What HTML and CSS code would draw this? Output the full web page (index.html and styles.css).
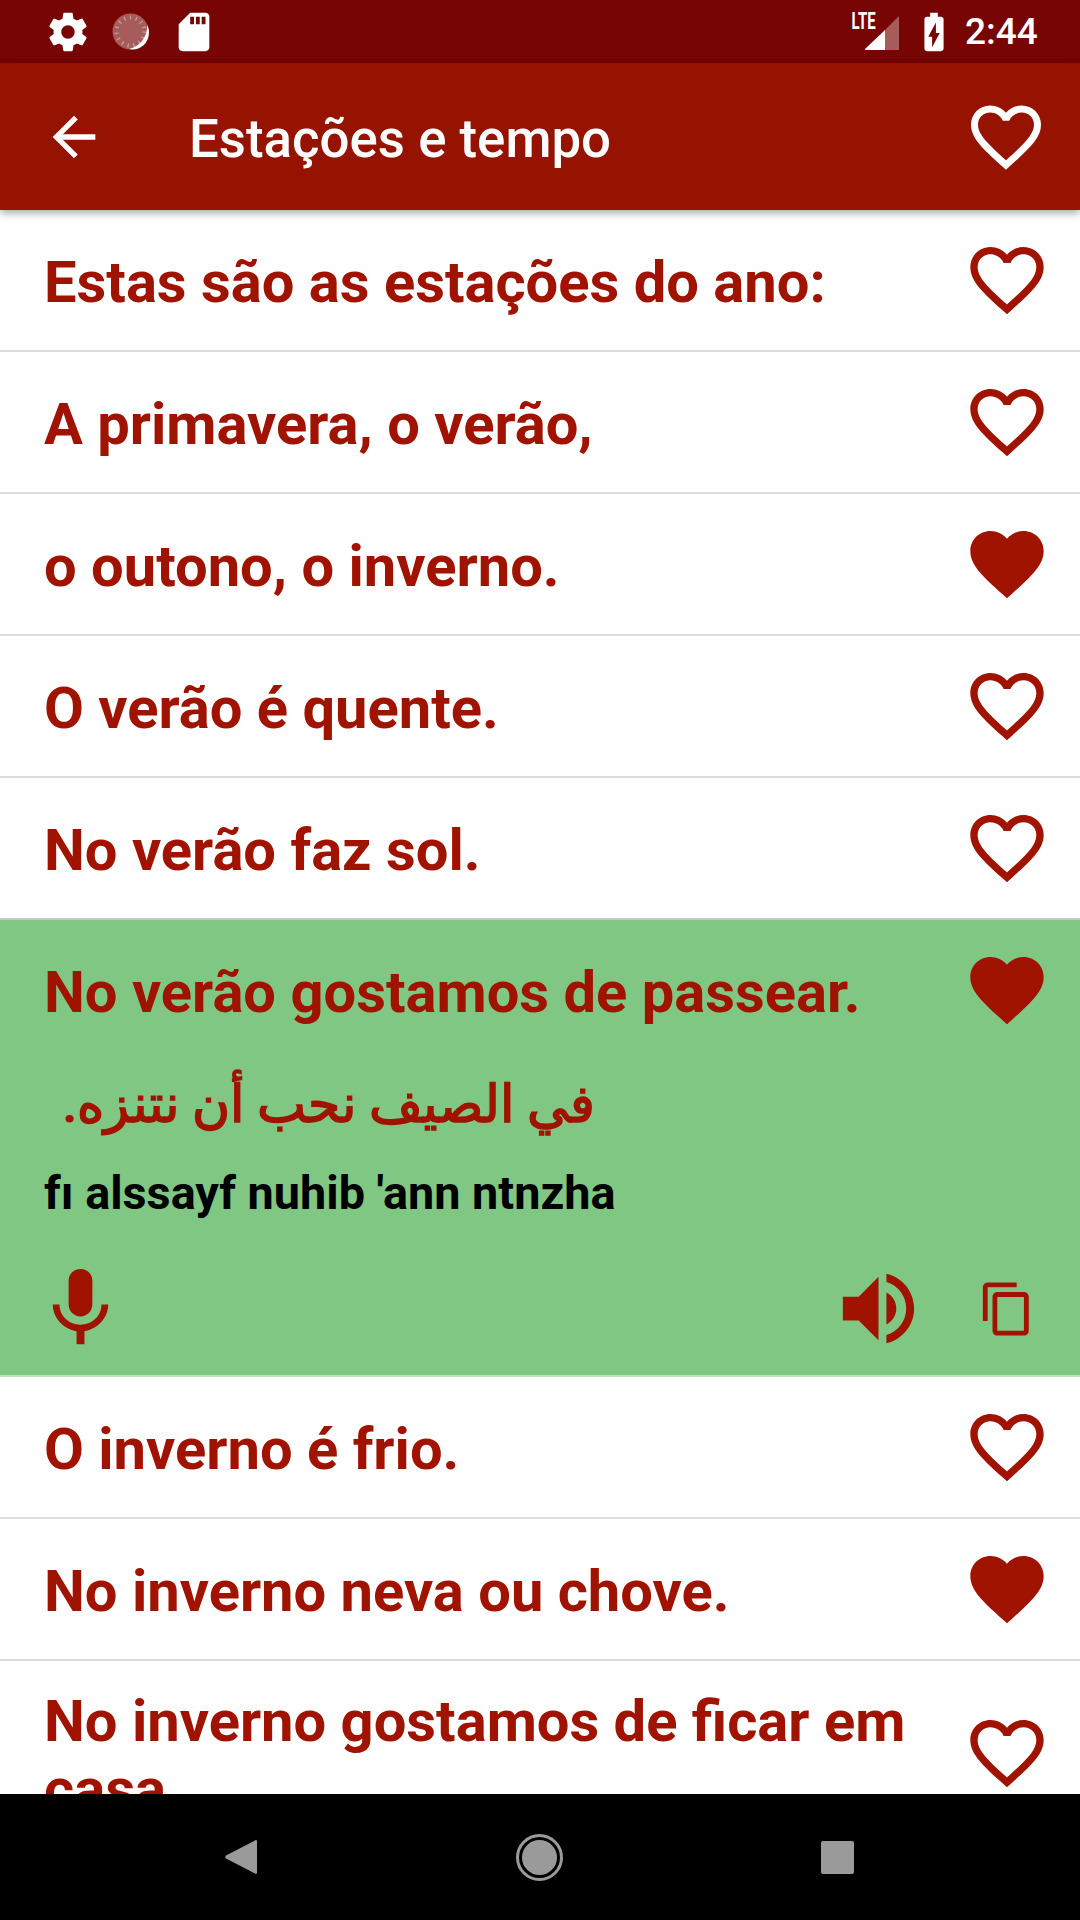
FILE: index.html
```html
<!DOCTYPE html>
<html lang="pt">
<head>
    <meta charset="utf-8">
    <title>Estações e tempo</title>
    <link rel="stylesheet" href="styles.css">
</head>
<body>
<div id="screen">
    <div id="status-bar">
        <svg class="st-gear" viewBox="0 0 24 24"><path d="M19.43 12.98c.04-.32.07-.64.07-.98s-.03-.66-.07-.98l2.11-1.65c.19-.15.24-.42.12-.64l-2-3.46c-.12-.22-.39-.3-.61-.22l-2.49 1c-.52-.4-1.08-.73-1.69-.98l-.38-2.65C14.46 2.18 14.25 2 14 2h-4c-.25 0-.46.18-.49.42l-.38 2.65c-.61.25-1.17.59-1.69.98l-2.49-1c-.23-.09-.49 0-.61.22l-2 3.46c-.13.22-.07.49.12.64l2.11 1.65c-.04.32-.07.65-.07.98s.03.66.07.98l-2.11 1.65c-.19.15-.24.42-.12.64l2 3.46c.12.22.39.3.61.22l2.49-1c.52.4 1.08.73 1.69.98l.38 2.65c.03.24.24.42.49.42h4c.25 0 .46-.18.49-.42l.38-2.65c.61-.25 1.17-.59 1.69-.98l2.49 1c.23.09.49 0 .61-.22l2-3.46c.12-.22.07-.49-.12-.64l-2.11-1.65zM12 15.5c-1.93 0-3.5-1.57-3.5-3.5s1.57-3.5 3.5-3.5 3.5 1.57 3.5 3.5-1.57 3.5-3.5 3.5z"/></svg>
        <svg class="st-sync" viewBox="0 0 40 40">
            <circle cx="19.5" cy="19.5" r="18" fill="#fff" fill-opacity=".35"/>
            <circle cx="19.5" cy="19.5" r="14" fill="none" stroke="#fff" stroke-opacity=".4" stroke-width="4" stroke-dasharray="1.3 4.6"/>
            <path d="M36 13c1 9 -5 21 -18 24 8 2 20 -3 20 -17 0 -3 -1 -5 -2 -7z"/>
        </svg>
        <svg class="st-sd" viewBox="0 0 24 24"><path d="M18 2h-8L4.02 8 4 20c0 1.1.9 2 2 2h12c1.1 0 2-.9 2-2V4c0-1.1-.9-2-2-2zm-6 6h-2V4h2v4zm3 0h-2V4h2v4zm3 0h-2V4h2v4z"/></svg>
        <div class="spacer"></div>
        <div class="st-signal">
            <span class="st-lte">LTE</span>
            <svg viewBox="0 0 36 36">
                <path d="M1 34 21 15v20H2c-1 0-1.500-.5-1-1z"/>
                <path d="M21 15 35 1v33c0 .6-.4 1-1 1H21z" fill-opacity=".35"/>
            </svg>
        </div>
        <svg class="st-battery" viewBox="0 0 24 24"><path d="M15.67 4H14V2h-4v2H8.33C7.6 4 7 4.6 7 5.33v15.33C7 21.4 7.6 22 8.33 22h7.33c.74 0 1.34-.6 1.34-1.33V5.33C17 4.6 16.4 4 15.67 4zM11 20v-5.5H9L13 7v5.5h2L11 20z"/></svg>
        <span class="st-time">2:44</span>
    </div>

    <header id="app-bar">
        <svg class="back" viewBox="0 0 24 24"><path d="M20 11H7.83l5.59-5.59L12 4l-8 8 8 8 1.41-1.41L7.83 13H20v-2z"/></svg>
        <h1>Estações e tempo</h1>
        <svg class="bar-heart" viewBox="0 0 24 24"><use href="#heart-line"/></svg>
    </header>

    <main id="list">
        <div class="phrase">
            <div class="phrase-head"><p>Estas são as estações do ano:</p><svg class="heart" viewBox="0 0 24 24"><use href="#heart-line"/></svg></div>
        </div>
        <div class="phrase">
            <div class="phrase-head"><p>A primavera, o verão,</p><svg class="heart" viewBox="0 0 24 24"><use href="#heart-line"/></svg></div>
        </div>
        <div class="phrase">
            <div class="phrase-head"><p>o outono, o inverno.</p><svg class="heart" viewBox="0 0 24 24"><use href="#heart-full"/></svg></div>
        </div>
        <div class="phrase">
            <div class="phrase-head"><p>O verão é quente.</p><svg class="heart" viewBox="0 0 24 24"><use href="#heart-line"/></svg></div>
        </div>
        <div class="phrase">
            <div class="phrase-head"><p>No verão faz sol.</p><svg class="heart" viewBox="0 0 24 24"><use href="#heart-line"/></svg></div>
        </div>
        <div class="phrase open">
            <div class="phrase-head"><p>No verão gostamos de passear.</p><svg class="heart" viewBox="0 0 24 24"><use href="#heart-full"/></svg></div>
            <p class="arabic" lang="ar" dir="rtl">في الصيف نحب أن نتنزه.</p>
            <p class="translit">fı alssayf nuhib 'ann ntnzha</p>
            <div class="actions">
                <svg class="mic" viewBox="0 0 24 24"><path d="M12 14c1.660 0 2.990-1.340 2.990-3L15 5c0-1.660-1.340-3-3-3S9 3.340 9 5v6c0 1.660 1.340 3 3 3zm5.300-3c0 3-2.540 5.100-5.300 5.100S6.700 14 6.700 11H5c0 3.410 2.720 6.230 6 6.720V21h2v-3.280c3.280-.48 6-3.300 6-6.720h-1.700z"/></svg>
                <div class="spacer"></div>
                <svg class="speaker" viewBox="0 0 24 24"><path d="M3 9v6h4l5 5V4L7 9H3zm13.500 3c0-1.770-1.020-3.290-2.500-4.030v8.050c1.480-.73 2.500-2.250 2.500-4.020zM14 3.230v2.060c2.890.86 5 3.540 5 6.710s-2.110 5.850-5 6.710v2.060c4.010-.91 7-4.490 7-8.770s-2.990-7.860-7-8.770z"/></svg>
                <svg class="copy" viewBox="0 0 24 24"><path d="M16 1H4c-1.100 0-2 .9-2 2v14h2V3h12V1zm3 4H8c-1.100 0-2 .9-2 2v14c0 1.100.9 2 2 2h11c1.100 0 2-.9 2-2V7c0-1.100-.9-2-2-2zm0 16H8V7h11v14z"/></svg>
            </div>
        </div>
        <div class="phrase">
            <div class="phrase-head"><p>O inverno é frio.</p><svg class="heart" viewBox="0 0 24 24"><use href="#heart-line"/></svg></div>
        </div>
        <div class="phrase">
            <div class="phrase-head"><p>No inverno neva ou chove.</p><svg class="heart" viewBox="0 0 24 24"><use href="#heart-full"/></svg></div>
        </div>
        <div class="phrase">
            <div class="phrase-head"><p>No inverno gostamos de ficar em casa.</p><svg class="heart" viewBox="0 0 24 24"><use href="#heart-line"/></svg></div>
        </div>
    </main>

    <nav id="nav-bar">
        <svg class="nav-back" viewBox="0 0 32 36"><path d="M30 1.500c1 -.8 2 -.3 2 1v31c0 1.300 -1 1.800 -2 1L1 19.500c-1 -.8 -1 -2.200 0 -3z"/></svg>
        <div class="nav-home"><div class="nav-home-dot"></div></div>
        <div class="nav-recent"></div>
    </nav>
</div>

<!-- shared heart shapes -->
<svg class="defs" width="0" height="0">
    <defs>
        <path id="heart-line" d="M16.500 3c-1.740 0-3.410.81-4.500 2.090C10.910 3.810 9.240 3 7.500 3 4.420 3 2 5.420 2 8.500c0 3.780 3.400 6.860 8.550 11.540L12 21.350l1.450-1.320C18.600 15.360 22 12.280 22 8.500 22 5.420 19.580 3 16.500 3zm-4.400 15.550l-.1.1-.1-.1C7.140 14.240 4 11.390 4 8.500 4 6.500 5.500 5 7.500 5c1.540 0 3.040.99 3.570 2.360h1.870C13.460 5.990 14.960 5 16.500 5c2 0 3.500 1.500 3.500 3.500 0 2.890-3.140 5.740-7.900 10.050z"/>
        <path id="heart-full" d="M12 21.350l-1.450-1.320C5.400 15.360 2 12.280 2 8.500 2 5.420 4.420 3 7.500 3c1.740 0 3.410.81 4.500 2.090C13.090 3.810 14.760 3 16.500 3 19.580 3 22 5.420 22 8.500c0 3.780-3.400 6.860-8.550 11.540L12 21.350z"/>
    </defs>
</svg>
</body>
</html>
```

FILE: styles.css
```css
:root {
    --red: #a01300;
    --bar: #951300;
    --status: #760504;
    --green: #81c784;
    --line: #dcdcdc;
}

* {
    box-sizing: border-box;
    font-family: Roboto, sans-serif;
}

body {
    margin: 0;
    background-color: white;
}

p, h1 {
    margin: 0;
}

svg {
    display: block;
    flex: none;
}

.defs {
    display: none;
}

.spacer {
    flex: 1;
}

#screen {
    display: flex;
    flex-direction: column;
    height: 1920px;
    overflow: hidden;
}

/* status bar */
#status-bar {
    display: flex;
    align-items: center;
    flex: none;
    height: 63px;
    padding-left: 45px;
    background-color: var(--status);
    fill: white;
}

.st-gear, .st-sd, .st-battery {
    width: 46px;
    height: 46px;
}

.st-sync {
    width: 40px;
    height: 40px;
    margin-left: 20px;
}

.st-sd {
    margin-left: 20px;
}

.st-signal {
    position: relative;
    width: 36px;
    height: 36px;
    margin-top: 2px;
}

.st-lte {
    position: absolute;
    top: -7px;
    left: -19px;
    font-size: 23px;
    font-weight: 700;
    color: white;
    transform: scaleX(.65);
}

.st-battery {
    margin-left: 11px;
}

.st-time {
    width: 71px;
    margin-left: 8px;
    margin-right: 44px;
    font-size: 37px;
    font-weight: 500;
    white-space: nowrap;
    color: white;
}

/* app bar */
#app-bar {
    position: relative;
    z-index: 2;
    display: flex;
    align-items: center;
    flex: none;
    height: 147px;
    padding-left: 42px;
    background-color: var(--bar);
    box-shadow: 0 3px 8px rgba(0, 0, 0, .35);
    fill: white;
}

.back {
    width: 64px;
    height: 64px;
}

#app-bar h1 {
    flex: 1;
    margin-left: 83px;
    padding-top: 4px;
    font-size: 52.8px;
    font-weight: 500;
    color: white;
}

.bar-heart {
    width: 84px;
    height: 84px;
    margin-right: 32px;
}

/* phrase list */
#list {
    flex: 1;
    overflow: hidden;
    fill: var(--red);
}

.phrase {
    border-bottom: 2px solid var(--line);
    color: var(--red);
}

.phrase:has(+ .open) {
    border-bottom-color: #c8c8c8;
}

.phrase-head {
    display: flex;
    align-items: center;
    min-height: 140px;
    padding: 21px 29px 22px 44px;
}

.phrase-head p {
    flex: 1;
    padding-top: 5px;
    font-size: 57.9px;
    font-weight: 700;
    line-height: 68px;
}

.heart {
    width: 88px;
    height: 88px;
    margin-left: 20px;
}

.open {
    border-bottom-color: #bfe0c0;
    background-color: var(--green);
}

.arabic {
    width: 595px;
    margin-top: 5px;
    font-size: 52px;
    font-weight: 700;
    line-height: 80px;
    white-space: nowrap;
}

.translit {
    margin-top: 21px;
    padding-left: 44px;
    font-size: 46.8px;
    font-weight: 700;
    color: black;
}

.actions {
    display: flex;
    align-items: center;
    padding: 41px 0 19px 33px;
}

.mic, .speaker {
    width: 95px;
    height: 95px;
}

.copy {
    width: 58px;
    height: 58px;
    margin-left: 52px;
    margin-right: 44px;
}

/* navigation bar */
#nav-bar {
    display: flex;
    align-items: center;
    flex: none;
    height: 126px;
    background-color: black;
}

.nav-back {
    width: 32px;
    height: 36px;
    margin-left: 225px;
    fill: #9a9a9a;
}

.nav-home {
    display: flex;
    align-items: center;
    justify-content: center;
    width: 47px;
    height: 47px;
    margin-left: 259px;
    border: 3px solid #9a9a9a;
    border-radius: 50%;
}

.nav-home-dot {
    width: 35px;
    height: 35px;
    border-radius: 50%;
    background-color: #9a9a9a;
}

.nav-recent {
    width: 33px;
    height: 33px;
    margin-left: 258px;
    border-radius: 2px;
    background-color: #9a9a9a;
}
```
